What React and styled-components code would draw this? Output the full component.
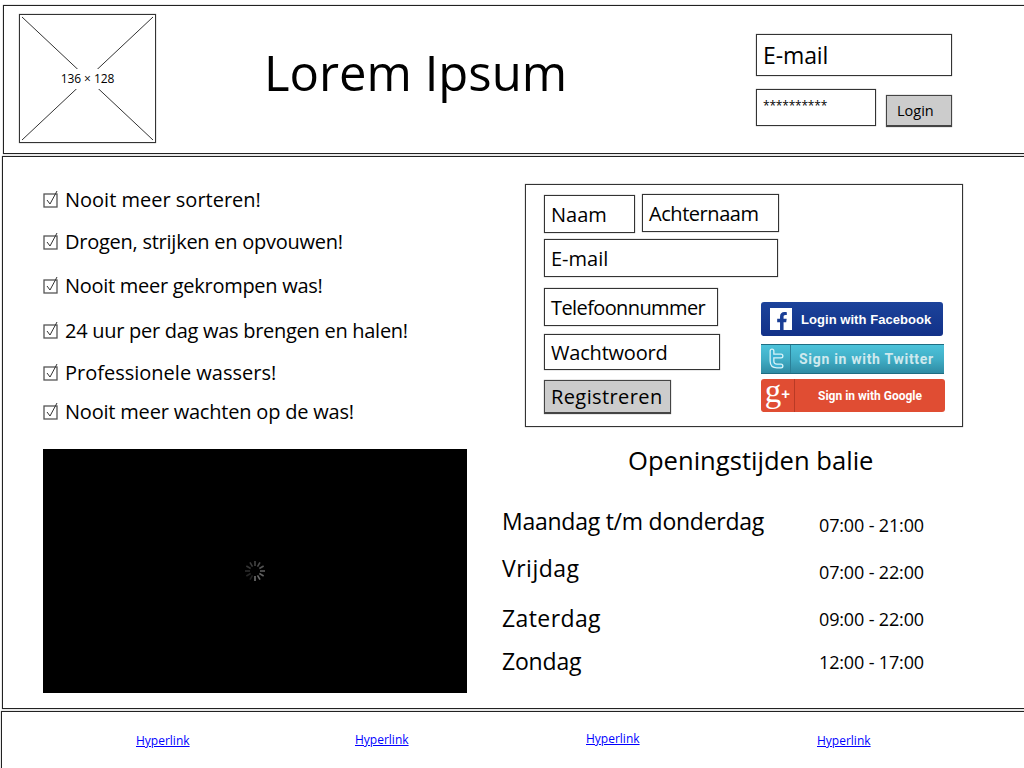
import styled, { createGlobalStyle } from "styled-components";
import { FaFacebookF } from "react-icons/fa";

const sketchFont = `"Open Sans", "Noto Sans", sans-serif`;

const GlobalStyle = createGlobalStyle`
  html, body {
    margin: 0;
    padding: 0;
    background: #fff;
  }
  * {
    box-sizing: border-box;
  }
`;

const Page = styled.div`
  width: 1024px;
  height: 768px;
  padding-top: 5px;
  overflow: hidden;
  font-family: ${sketchFont};
  color: #000;
  background: #fff;
`;

const Panel = styled.div`
  border: 1px solid #222;
  box-shadow: 0 0 1px #777;
  width: 1040px;
`;

const Header = styled(Panel)`
  display: flex;
  align-items: flex-start;
  height: 149px;
  margin-left: 3px;
  padding: 8px 0 0 15px;
`;

const Logo = styled.div`
  position: relative;
  display: flex;
  align-items: center;
  justify-content: center;
  width: 137px;
  height: 129px;
  border: 1px solid #333;
  box-shadow: 0 0 1px #777;
`;

const LogoLines = styled.svg`
  position: absolute;
  inset: 0;
  width: 100%;
  height: 100%;
`;

const LogoLabel = styled.span`
  position: relative;
  padding: 3px;
  background: #fff;
  font-size: 12px;
  line-height: 14px;
  letter-spacing: -0.1px;
`;

const Title = styled.h1`
  width: 300px;
  margin: 27px 0 0 108px;
  font-size: 49px;
  font-weight: 400;
  line-height: 62px;
  white-space: nowrap;
`;

const LoginBox = styled.div`
  width: 196px;
  margin: 20px 0 0 192px;
`;

const LoginRow = styled.div`
  display: flex;
  align-items: flex-start;
  gap: 10px;
  margin-top: 13px;
`;

const Field = styled.div`
  display: flex;
  align-items: center;
  flex: none;
  width: ${(p) => p.$w}px;
  height: ${(p) => p.$h}px;
  margin-top: ${(p) => p.$mt || 0}px;
  padding-left: 6px;
  border: 1px solid #333;
  box-shadow: 0 0 1px #777;
  background: #fff;
  font-size: ${(p) => p.$size || 20}px;
  letter-spacing: ${(p) => p.$ls || 0}px;
  white-space: nowrap;
`;

const Password = styled(Field)`
  align-items: flex-start;
  padding-top: 10px;
  font-size: 12px;
  line-height: 12px;
  letter-spacing: -0.2px;
`;

const GreyButton = styled(Field)`
  background: #ccc;
  border-color: #444;
  border-width: 1px 1px 2px 1px;
`;

const LoginButton = styled(GreyButton)`
  padding-left: 10px;
`;

const Main = styled(Panel)`
  display: flex;
  height: 553px;
  margin: 2px 0 0 2px;
  padding: 27px 0 0 40px;
`;

const LeftCol = styled.div`
  width: 424px;
  margin-right: 35px;
`;

const CheckList = styled.ul`
  margin: 0;
  padding: 0;
  list-style: none;
`;

const CheckItem = styled.li`
  display: flex;
  align-items: center;
  height: 32px;
  margin-top: ${(p) => p.$mt}px;
  padding-bottom: 2px;
  font-size: 20px;
  letter-spacing: ${(p) => p.$ls}px;
  white-space: nowrap;
`;

const CheckIcon = styled.svg`
  flex: none;
  width: 16px;
  height: 18px;
  margin-right: 6px;
`;

const Video = styled.div`
  display: flex;
  align-items: center;
  justify-content: center;
  height: 244px;
  margin-top: 21px;
  background: #000;
`;

const Spinner = styled.svg`
  width: 24px;
  height: 24px;
`;

const RightCol = styled.div`
  width: 462px;
`;

const RegisterForm = styled.div`
  width: 438px;
  height: 243px;
  margin-left: 23px;
  padding: 10px 0 0 18px;
  border: 1px solid #333;
  box-shadow: 0 0 1px #777;
`;

const NameRow = styled.div`
  display: flex;
  align-items: flex-start;
  gap: 7px;
`;

const NudgedField = styled(Field)`
  margin-top: -1px;
`;

const FormBottom = styled.div`
  display: flex;
`;

const FormFields = styled.div`
  width: 217px;
`;

const SocialCol = styled.div`
  padding-top: 25px;
`;

const SocialButton = styled.div`
  display: flex;
  align-items: center;
  width: ${(p) => p.$w}px;
  height: ${(p) => p.$h}px;
  margin-top: ${(p) => p.$mt || 0}px;
  border-radius: 3px;
  font-family: Roboto, "Liberation Sans", sans-serif;
  font-weight: 700;
  color: #fff;
  white-space: nowrap;
`;

const FacebookButton = styled(SocialButton)`
  padding-left: 9px;
  background: linear-gradient(#1c439b, #123188);
  font-family: "Liberation Sans", sans-serif;
  font-size: 13px;
  letter-spacing: 0.05px;
`;

const FacebookMark = styled.span`
  display: flex;
  align-items: flex-end;
  justify-content: flex-end;
  width: 22px;
  height: 22px;
  margin-right: 9px;
  padding-right: 1px;
  background: #fff;
  color: #1a3e96;
  font-size: 18px;
`;

const TwitterButton = styled(SocialButton)`
  background: linear-gradient(#4cc3da 0%, #41aec6 50%, #2f8ba3 100%);
  border-radius: 0;
  border-top: 1px solid #1f6d82;
  border-bottom: 1px solid #1f6d82;
  color: #cfe9ee;
  font-size: 14px;
  letter-spacing: 0.7px;
`;

const TwitterMark = styled.span`
  display: flex;
  align-items: center;
  justify-content: center;
  width: 30px;
  height: 100%;
  margin-right: 8px;
  border-right: 1px solid #2b8097;
`;

const GoogleButton = styled(SocialButton)`
  background: #e04d33;
  font-size: 12px;
`;

const GoogleMark = styled.span`
  display: flex;
  align-items: center;
  justify-content: center;
  width: 34px;
  height: 100%;
  margin-right: 23px;
  padding-bottom: 9px;
  border-right: 1px solid #b93a25;
  font-family: "Liberation Serif", serif;
  font-size: 33px;
  font-weight: 400;
  line-height: 26px;
`;

const GooglePlus = styled.span`
  padding-top: 6px;
  font-family: "Liberation Sans", sans-serif;
  font-size: 15px;
  font-weight: 700;
`;

const Hours = styled.section`
  margin-top: 16px;
`;

const HoursTitle = styled.h2`
  height: 36px;
  margin: 0 0 25px;
  padding-left: 126px;
  font-size: 25.6px;
  font-weight: 400;
  line-height: 36px;
  white-space: nowrap;
`;

const HoursRow = styled.div`
  display: grid;
  grid-template-columns: 317px 1fr;
  align-items: center;
  height: 36px;
  margin-top: ${(p) => p.$mt}px;
`;

const Day = styled.span`
  padding-bottom: 2px;
  font-size: 23px;
  letter-spacing: ${(p) => p.$ls}px;
  white-space: nowrap;
`;

const Time = styled.span`
  padding-top: ${(p) => p.$dy}px;
  font-size: 18px;
  letter-spacing: -0.15px;
  white-space: nowrap;
`;

const Footer = styled(Panel)`
  display: grid;
  grid-template-columns: 219px 231px 231px 100px;
  height: 80px;
  margin: 2px 0 0 1px;
  padding: 14px 0 0 134px;
`;

const FooterLink = styled.a`
  margin-top: ${(p) => p.$mt}px;
  color: #00f;
  font-size: 12px;
  line-height: 16px;
  text-decoration: underline;
`;

const benefits = [
  ["Nooit meer sorteren!", 0, 0],
  ["Drogen, strijken en opvouwen!", 10, -0.25],
  ["Nooit meer gekrompen was!", 12, -0.28],
  ["24 uur per dag was brengen en halen!", 13, -0.28],
  ["Professionele wassers!", 10, 0],
  ["Nooit meer wachten op de was!", 7, -0.2],
];

const openingHours = [
  ["Maandag t/m donderdag", "07:00 - 21:00", 0, 6, -0.25],
  ["Vrijdag", "07:00 - 22:00", 11, 6, 0.5],
  ["Zaterdag", "09:00 - 22:00", 14, 0, 0.4],
  ["Zondag", "12:00 - 17:00", 7, 0, -0.2],
];

const links = [2, 1, 0, 2];

const Check = () => (
  <CheckIcon viewBox="0 0 16 18">
    <rect x="1" y="4" width="13" height="13" fill="none" stroke="#555" strokeWidth="1.3" />
    <path d="M4 10 L7 14 L14 1" fill="none" stroke="#333" strokeWidth="1" />
  </CheckIcon>
);

const LoadingSpinner = () => (
  <Spinner viewBox="-12 -12 24 24">
    {Array.from({ length: 12 }, (_, i) => (
      <line
        key={i}
        x1="0"
        y1="-5"
        x2="0"
        y2="-10"
        stroke="#fff"
        strokeOpacity={0.12 + (i / 12) * 0.35}
        strokeWidth="1.6"
        transform={`rotate(${i * 30 + 210})`}
      />
    ))}
  </Spinner>
);

const App = () => {
  return (
    <Page>
      <GlobalStyle />
      <Header>
        <Logo>
          <LogoLines viewBox="0 0 135 127" preserveAspectRatio="none">
            <path d="M2 2 L133 125 M133 2 L2 125" stroke="#333" strokeWidth="1" />
          </LogoLines>
          <LogoLabel>136 × 128</LogoLabel>
        </Logo>
        <Title>Lorem Ipsum</Title>
        <LoginBox>
          <Field $w={196} $h={42} $size={23} $ls={-0.1}>E-mail</Field>
          <LoginRow>
            <Password $w={120} $h={37}>**********</Password>
            <LoginButton $w={66} $h={32} $mt={6} $size={14.5}>Login</LoginButton>
          </LoginRow>
        </LoginBox>
      </Header>
      <Main>
        <LeftCol>
          <CheckList>
            {benefits.map(([text, mt, ls]) => (
              <CheckItem key={text} $mt={mt} $ls={ls}>
                <Check />
                {text}
              </CheckItem>
            ))}
          </CheckList>
          <Video>
            <LoadingSpinner />
          </Video>
        </LeftCol>
        <RightCol>
          <RegisterForm>
            <NameRow>
              <Field $w={91} $h={38}>Naam</Field>
              <NudgedField $w={137} $h={38} $ls={-0.45}>Achternaam</NudgedField>
            </NameRow>
            <Field $w={234} $h={38} $mt={6}>E-mail</Field>
            <FormBottom>
              <FormFields>
                <Field $w={174} $h={38} $mt={11} $ls={-0.6}>Telefoonnummer</Field>
                <Field $w={176} $h={36} $mt={8} $ls={-0.2}>Wachtwoord</Field>
                <GreyButton $w={127} $h={34} $mt={10} $ls={0.4}>Registreren</GreyButton>
              </FormFields>
              <SocialCol>
                <FacebookButton $w={182} $h={34}>
                  <FacebookMark>
                    <FaFacebookF />
                  </FacebookMark>
                  Login with Facebook
                </FacebookButton>
                <TwitterButton $w={183} $h={30} $mt={8}>
                  <TwitterMark>
                    <svg width="16" height="22" viewBox="0 0 16 22">
                      <path
                        d="M4 3 V13 Q4 18 9 18 H13 M4 8 H13"
                        fill="none"
                        stroke="#d8f3f8"
                        strokeWidth="5"
                        strokeLinecap="round"
                      />
                      <path
                        d="M4 3 V13 Q4 18 9 18 H13 M4 8 H13"
                        fill="none"
                        stroke="#3db2d3"
                        strokeWidth="2.4"
                        strokeLinecap="round"
                      />
                    </svg>
                  </TwitterMark>
                  Sign in with Twitter
                </TwitterButton>
                <GoogleButton $w={184} $h={33} $mt={5}>
                  <GoogleMark>
                    g<GooglePlus>+</GooglePlus>
                  </GoogleMark>
                  Sign in with Google
                </GoogleButton>
              </SocialCol>
            </FormBottom>
          </RegisterForm>
          <Hours>
            <HoursTitle>Openingstijden balie</HoursTitle>
            {openingHours.map(([day, time, mt, dy, ls]) => (
              <HoursRow key={day} $mt={mt}>
                <Day $ls={ls}>{day}</Day>
                <Time $dy={dy}>{time}</Time>
              </HoursRow>
            ))}
          </Hours>
        </RightCol>
      </Main>
      <Footer>
        {links.map((mt, i) => (
          <FooterLink key={i} href="#" $mt={mt + 5}>
            Hyperlink
          </FooterLink>
        ))}
      </Footer>
    </Page>
  );
};

export default App;
